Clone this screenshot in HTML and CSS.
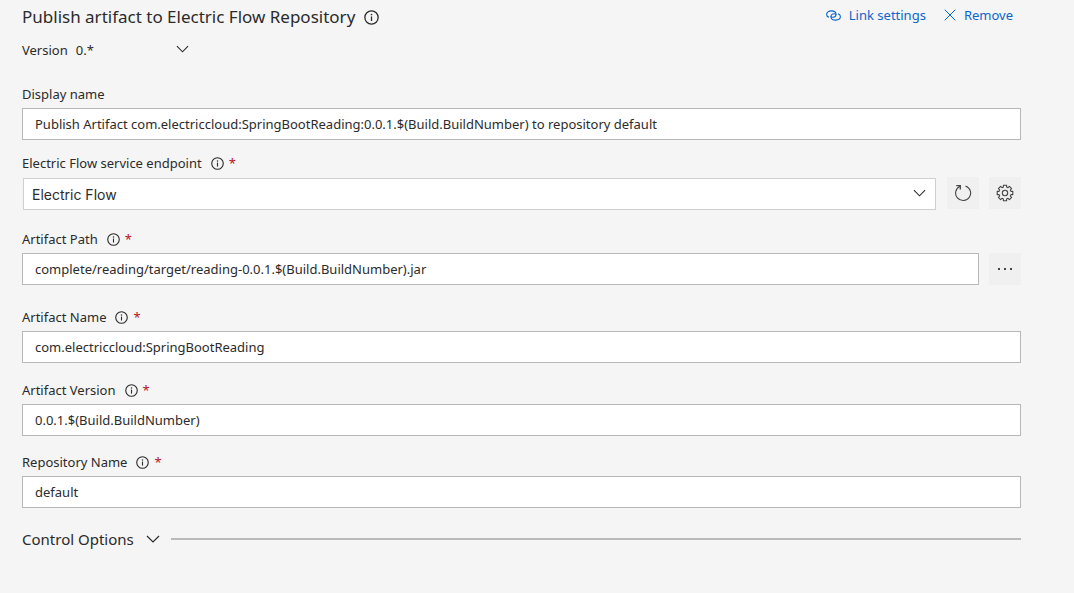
FILE: index.html
```html
<!DOCTYPE html>
<html lang="en">
<head>
<meta charset="utf-8">
<title>Publish artifact to Electric Flow Repository</title>
<link rel="stylesheet" href="styles.css">
</head>
<body>
<svg class="defs" aria-hidden="true">
  <symbol id="info" viewBox="0 0 14 14"><circle cx="7" cy="7" r="6.2" fill="none" stroke="currentColor" stroke-width="1.2"/><path d="M7 6v4.3" stroke="currentColor" stroke-width="1.2"/><circle cx="7" cy="4.2" r=".8" fill="currentColor"/></symbol>
  <symbol id="chevron" viewBox="0 0 14 8"><path d="M1 1l6 6 6-6" fill="none" stroke="currentColor" stroke-width="1.2"/></symbol>
</svg>
<main class="task">
  <header class="task-header">
    <h1 class="task-title">Publish artifact to Electric Flow Repository <svg class="icon-info-large"><use href="#info"/></svg></h1>
    <nav class="actions">
      <a class="action" href="#link"><svg class="icon-link" viewBox="0 0 15 11" fill="none" stroke="currentColor" stroke-width="1.1"><path d="M3 7.200C1.500 6.700.6 5.700.6 4.400.6 2.300 2.700.900 5.300.900c2.600 0 4.700 1.400 4.700 3.400 0 1.800-1.500 3-3.200 3-1.200 0-1.900-.6-1.900-1.400"/><path d="M12 3.800c1.500.5 2.400 1.500 2.400 2.800 0 2.100-2.100 3.500-4.700 3.500C7.100 10.100 5 8.700 5 6.700c0-1.800 1.500-3 3.200-3 1.200 0 1.900.6 1.900 1.400"/></svg>Link settings</a>
      <a class="action" href="#remove"><svg class="icon-remove" viewBox="0 0 12 12" fill="none" stroke="currentColor" stroke-width="1"><path d="M.7.7l10.600 10.600M11.300.7L.7 11.300"/></svg>Remove</a>
    </nav>
  </header>
  <div class="version">
    <label for="version">Version</label>
    <div class="version-picker">
      <select class="version-select" id="version"><option>0.*</option></select>
      <svg class="picker-chevron"><use href="#chevron"/></svg>
    </div>
  </div>
  <form class="fields">
    <div class="field">
      <label class="label" for="display">Display name</label>
      <input class="input" id="display" type="text" value="Publish Artifact com.electriccloud:SpringBootReading:0.0.1.$(Build.BuildNumber) to repository default">
    </div>
    <div class="field field-endpoint">
      <label class="label" for="endpoint">Electric Flow service endpoint <svg class="icon-info"><use href="#info"/></svg><span class="required">*</span></label>
      <div class="row">
        <div class="picker">
          <select class="select" id="endpoint"><option>Electric Flow</option></select>
          <svg class="picker-chevron"><use href="#chevron"/></svg>
        </div>
        <button class="tool" type="button" aria-label="Refresh"><svg class="icon-tool" viewBox="0 0 18 18" fill="none" stroke="currentColor" stroke-width="1.1"><path d="M11.500 1.900A7.500 7.500 0 1 1 6 2.200"/><path d="M2.300 1.600h4v4" stroke-width="1.300"/></svg></button>
        <button class="tool" type="button" aria-label="Manage"><svg class="icon-tool" viewBox="-9 -9 18 18" fill="none" stroke="currentColor" stroke-width="1.1" stroke-linejoin="round"><path d="M5.900-1.600L7.800-1.600 7.800 1.600 5.900 1.600 5.300 3 6.600 4.400 4.400 6.600 3 5.300 1.600 5.900 1.600 7.800-1.600 7.800-1.600 5.900-3 5.300-4.400 6.600-6.600 4.400-5.300 3-5.900 1.600-7.800 1.600-7.800-1.600-5.900-1.600-5.300-3-6.600-4.400-4.400-6.600-3-5.300-1.600-5.900-1.600-7.800 1.600-7.800 1.600-5.900 3-5.300 4.400-6.600 6.600-4.400 5.300-3z"/><circle r="2.700"/></svg></button>
      </div>
    </div>
    <div class="field field-path">
      <label class="label" for="path">Artifact Path <svg class="icon-info"><use href="#info"/></svg><span class="required">*</span></label>
      <div class="row">
        <input class="input" id="path" type="text" value="complete/reading/target/reading-0.0.1.$(Build.BuildNumber).jar">
        <button class="tool" type="button" aria-label="Browse"><svg class="icon-tool" viewBox="0 0 18 18" fill="currentColor"><path d="M2 8h2v2H2zM8 8h2v2H8zM14 8h2v2h-2z"/></svg></button>
      </div>
    </div>
    <div class="field field-name">
      <label class="label" for="name">Artifact Name <svg class="icon-info"><use href="#info"/></svg><span class="required">*</span></label>
      <input class="input" id="name" type="text" value="com.electriccloud:SpringBootReading">
    </div>
    <div class="field field-version">
      <label class="label" for="artifact-version">Artifact Version <svg class="icon-info"><use href="#info"/></svg><span class="required">*</span></label>
      <input class="input" id="artifact-version" type="text" value="0.0.1.$(Build.BuildNumber)">
    </div>
    <div class="field">
      <label class="label" for="repository">Repository Name <svg class="icon-info"><use href="#info"/></svg><span class="required">*</span></label>
      <input class="input" id="repository" type="text" value="default">
    </div>
  </form>
  <button class="section" type="button">Control Options <svg class="section-chevron"><use href="#chevron"/></svg><span class="rule"></span></button>
</main>
</body>
</html>
```
FILE: styles.css
```css
* { box-sizing: border-box; }
body {
  margin: 0;
  background: #f5f5f5;
  color: #2b2b2b;
  font: 13px/20px "Noto Sans", "Open Sans", sans-serif;
}
svg { display: block; flex: none; }
.defs { width: 0; height: 0; position: absolute; }
button, input, select { font: inherit; color: inherit; }
.task { padding: 4px 53px 40px 22px; }
.task-header { display: flex; justify-content: space-between; align-items: flex-start; }
.task-title {
  display: flex;
  align-items: center;
  gap: 9px;
  margin: 0;
  font-size: 17px;
  line-height: 26px;
  font-weight: 400;
}
.icon-info-large { width: 15px; height: 15px; }
.actions { display: flex; gap: 18px; padding-right: 8px; line-height: 22px; }
.action { display: flex; align-items: center; gap: 8px; color: #0b66cc; text-decoration: none; }
.icon-link { width: 15px; height: 11px; }
.icon-remove { width: 12px; height: 12px; }
.version { display: flex; align-items: center; gap: 8px; margin-top: 10px; }
.version-picker { position: relative; width: 123px; }
.version-select {
  display: block;
  width: 100%;
  height: 20px;
  padding: 0;
  border: 0;
  background: transparent;
  appearance: none;
}
.picker-chevron {
  position: absolute;
  top: 50%;
  right: 10px;
  width: 13px;
  height: 8px;
  margin-top: -5px;
  pointer-events: none;
}
.fields { margin-top: 24px; }
.field + .field { margin-top: 16px; }
.field + .field-endpoint { margin-top: 13px; }
.field + .field-path { margin-top: 19px; }
.field + .field-name { margin-top: 22px; }
.field + .field-version { margin-top: 17px; }
.label { display: flex; align-items: center; width: fit-content; margin-bottom: 4px; }
.icon-info { width: 13px; height: 13px; margin: 0 5px 0 9px; }
.required { color: #b5121b; }
.row { display: flex; gap: 10px; }
.input {
  display: block;
  flex: 1;
  width: 100%;
  min-width: 0;
  height: 32px;
  padding: 0 12px;
  border: 1px solid #b8b8b8;
  border-radius: 0;
  background: #fff;
}
.picker { position: relative; flex: 1; margin: 1px 1px 0 1px; }
.select {
  display: block;
  width: 100%;
  height: 32px;
  padding: 2px 8px 0;
  border: 1px solid #cfcfcf;
  border-radius: 0;
  background: #fff;
  font-family: Inter, sans-serif;
  font-size: 14px;
  appearance: none;
}
.tool {
  display: flex;
  align-items: center;
  justify-content: center;
  flex: none;
  width: 32px;
  height: 32px;
  padding: 0;
  border: 0;
  background: #f0f0f0;
  color: #444;
}
.icon-tool { width: 18px; height: 18px; }
.section {
  display: flex;
  align-items: center;
  width: 100%;
  margin-top: 20px;
  padding: 0;
  border: 0;
  background: transparent;
  font-size: 15px;
  line-height: 22px;
}
.section-chevron { width: 14px; height: 8px; margin: 0 11px 0 12px; }
.rule { flex: 1; height: 2px; background: #bababa; }
```
